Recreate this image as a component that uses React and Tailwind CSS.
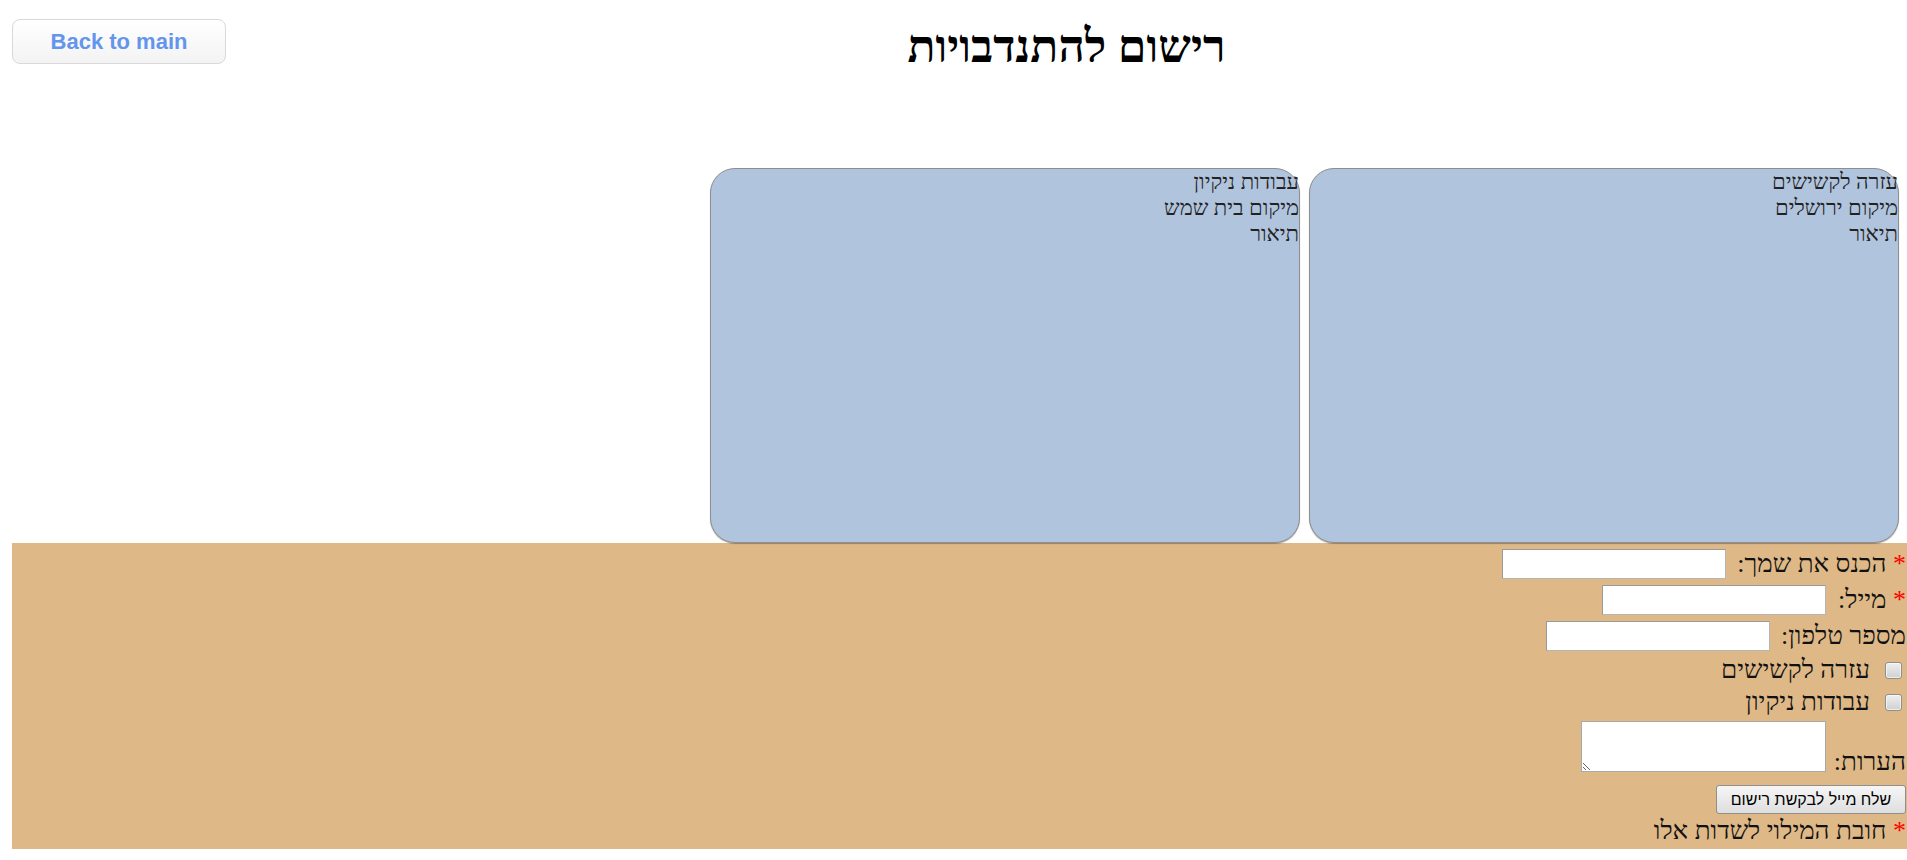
export default function App() {
  const serif = "font-['Liberation_Serif','DejaVu_Serif',serif]";
  const Star = () => <span className="text-[#ff0000]">*</span>;
  const Checkbox = () => (
    <span className="inline-block w-[17px] h-[17px] rounded-[3px] border border-[#8f8f8f] bg-gradient-to-b from-[#efefef] to-[#d0d0d0] shadow-[inset_0_0_0_1px_rgba(255,255,255,0.6)]" />
  );
  const inputCls = "w-[224px] h-[30px] bg-white border border-[#b5b5b5] border-t-[#9a9a9a] border-l-[#9a9a9a] outline-none";
  return (
    <div className={`min-h-[860px] w-[1907px] bg-white text-black ${serif}`}>
      <div className="flex h-[168px] items-start">
        <div className="pl-[12px] pt-[19px]">
          <button className="w-[214px] h-[45px] rounded-[8px] border border-[#d9d9d9] bg-gradient-to-b from-white to-[#f3f3f3] text-[22px] font-bold text-[#6495ed] font-['Liberation_Sans',Arial,sans-serif]">
            Back to main
          </button>
        </div>
        <h1 dir="rtl" className="flex-1 text-center font-bold text-[46px] leading-[52px] mt-[21px]">
          רישום להתנדבויות
        </h1>
      </div>

      <div className="flex justify-end gap-[9px] pr-[8px]">
        {[
          ["עבודות ניקיון", "מיקום בית שמש", "תיאור"],
          ["עזרה לקשישים", "מיקום ירושלים", "תיאור"],
        ].map((lines, i) => (
          <div
            key={i}
            dir="rtl"
            className="w-[590px] h-[375px] rounded-[25px] border border-[#8e8e8e] bg-[#b0c4de] shadow-[0_1px_1px_rgba(0,0,0,0.3)] text-right text-[22px] leading-[26px] text-[#222]"
          >
            {lines.map((l, j) => (
              <div key={j}>{l}</div>
            ))}
          </div>
        ))}
      </div>

      <div dir="rtl" className="ml-[12px] h-[306px] bg-[#deb887] pr-[1px] pt-[3px] text-[26px] leading-[28px] text-[#111]">
        <div className="flex h-[36px] items-center gap-[11px]">
          <span><Star /> הכנס את שמך:</span>
          <input className={inputCls} />
        </div>
        <div className="flex h-[36px] items-center gap-[12px]">
          <span><Star /> מייל:</span>
          <input className={inputCls} />
        </div>
        <div className="flex h-[36px] items-center gap-[11px]">
          <span>מספר טלפון:</span>
          <input className={inputCls} />
        </div>
        <div className="flex h-[32px] items-center gap-[15px] pr-[4px]">
          <Checkbox />
          <span>עזרה לקשישים</span>
        </div>
        <div className="flex h-[32px] items-center gap-[15px] pr-[4px]">
          <Checkbox />
          <span>עבודות ניקיון</span>
        </div>
        <div className="flex h-[56px] items-end gap-[8px]">
          <span className="leading-[24px]">הערות:</span>
          <textarea dir="rtl" className="w-[245px] h-[51px] mb-[2px] bg-white border border-[#a9a9a9] outline-none resize" />
        </div>
        <div className="flex h-[42px] items-start pt-[11px]">
          <button className="w-[190px] h-[29px] rounded-[3px] border border-[#8f8f8f] bg-gradient-to-b from-[#f6f6f6] to-[#dedede] text-[16px] text-black font-['Liberation_Sans',Arial,sans-serif]">
            שלח מייל לבקשת רישום
          </button>
        </div>
        <div className="flex h-[30px] items-center">
          <span><Star /> חובת המילוי לשדות אלו</span>
        </div>
      </div>
    </div>
  );
}
